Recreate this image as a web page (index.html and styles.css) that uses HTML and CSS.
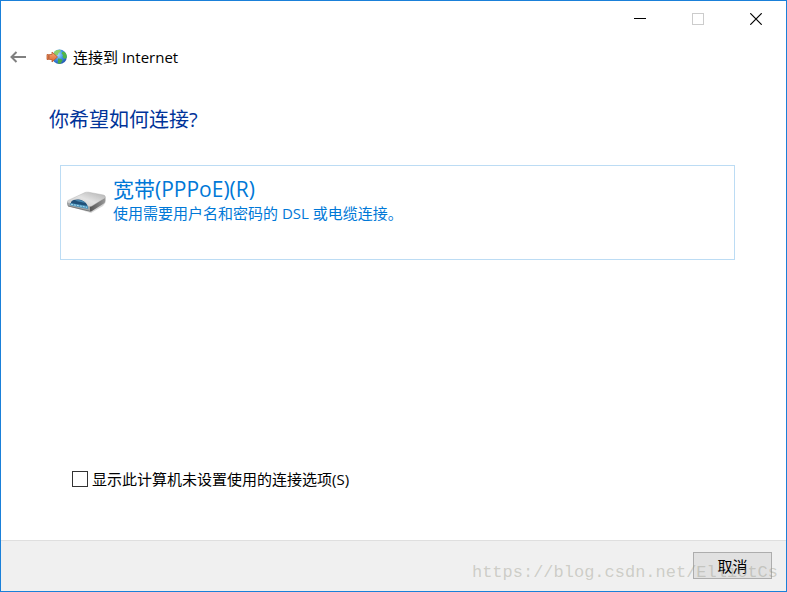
FILE: index.html
```html
<!DOCTYPE html>
<html lang="zh-CN">
    <head>
        <meta charset="utf-8">
        <title>连接到 Internet</title>
        <meta name="viewport" content="width=device-width, initial-scale=1.0">
        <link rel="stylesheet" href="styles.css">
    </head>
    <body>
        <div class="window">
            <div class="titlebar">
                <button class="caption" type="button" aria-label="最小化">
                    <svg width="12" height="12" viewBox="0 0 12 12" shape-rendering="crispEdges"><path d="M0 5.5h12" stroke="#000"/></svg>
                </button>
                <button class="caption" type="button" aria-label="最大化" disabled>
                    <svg width="12" height="12" viewBox="0 0 12 12" shape-rendering="crispEdges"><path d="M.5.5h11v11H.5z" fill="none" stroke="#ccc"/></svg>
                </button>
                <button class="caption" type="button" aria-label="关闭">
                    <svg width="12" height="12" viewBox="0 0 12 12"><path d="M.3.3l11.4 11.4M11.7.3L.3 11.7" stroke="#000" stroke-width="1.2"/></svg>
                </button>
            </div>
            <header class="header">
                <button class="back" type="button" aria-label="返回">
                    <svg width="16" height="12" viewBox="0 0 16 12"><path d="M16 6H1.500M6.500 1L1.500 6l5 5" fill="none" stroke="#808080" stroke-width="2"/></svg>
                </button>
                <svg class="globe" width="22" height="16" viewBox="0 0 22 16">
                    <defs>
                        <radialGradient id="sea" cx=".4" cy=".35" r=".75">
                            <stop offset="0" stop-color="#a5dcff"/>
                            <stop offset=".5" stop-color="#3b8fe8"/>
                            <stop offset="1" stop-color="#1c469e"/>
                        </radialGradient>
                        <linearGradient id="arrow" x2="0" y2="1">
                            <stop offset="0" stop-color="#f9ab78"/>
                            <stop offset="1" stop-color="#e0602a"/>
                        </linearGradient>
                    </defs>
                    <circle cx="13.5" cy="7.8" r="7.3" fill="url(#sea)"/>
                    <path d="M8 3.2C9.500 1.500 12 .6 14.500.9L14.800 2.500 12.500 4 12 6 9.500 6.500 8 5z" fill="#8ccf6a"/>
                    <path d="M16.500 2.500l2.500.7c1.500 1.700 2 3.600 1.700 5.600L18.500 10l-2-2 .5-2-1.500-1.500z" fill="#4fb648"/>
                    <path d="M12 9.500l3.500.5 1 1.500-2 3.300-2.700-.2z" fill="#48aa44"/>
                    <path d="M1 5.500h1.500v5H1zM3.300 5.500H6V3l5.500 5L6 13v-2.500H3.300z" fill="url(#arrow)" stroke="#b9582c" stroke-width=".8"/>
                </svg>
                <span class="title">连接到 Internet</span>
            </header>
            <main class="content">
                <h1 class="question">你希望如何连接?</h1>
                <button class="option" type="button">
                    <svg class="modem" width="40" height="22" viewBox="0 0 40 22">
                        <defs>
                            <linearGradient id="top" x1="1" x2="0" y2="1">
                                <stop offset="0" stop-color="#b0b0b0"/>
                                <stop offset=".5" stop-color="#e2e2e2"/>
                                <stop offset="1" stop-color="#c8c8c8"/>
                            </linearGradient>
                            <linearGradient id="side" x2="1">
                                <stop offset="0" stop-color="#555"/>
                                <stop offset="1" stop-color="#999"/>
                            </linearGradient>
                        </defs>
                        <path d="M3 15.500l20 5.500L39 11l-3 4-12 7z" fill="#bbb" opacity=".6"/>
                        <path d="M0 11L23 15v5.500L2 15.500Q0 15 0 13z" fill="#a0a4a6"/>
                        <path d="M23 15L38.500 6.500V10q0 1.500-1.500 2.400L25 20l-2 .5z" fill="url(#side)"/>
                        <path d="M0 11Q0 9.500 3 8.500L18 1.500Q19.500 1 21.500 1.200l15 2.800q2 .4 2 2.500L25 15q-1.500.7-3 .5L1 12z" fill="url(#top)" stroke="#aaa" stroke-width=".4"/>
                        <path d="M4 11C7 7.300 17 7.500 20.500 14.500L20 15.500 4 12.500z" fill="#205078"/>
                        <path d="M8 9.700c4-1.300 8-.4 10.500 2.300L14 11z" fill="#4a8cb4"/>
                        <path d="M3 12l18 3v3L3 14.300z" fill="#4c94bc"/>
                        <path d="M4 13.300l16 3" stroke="#a4daf0" stroke-width="1" stroke-dasharray="2 1"/>
                        <path d="M1 15l22 5.300 2-.6" fill="none" stroke="#606060" stroke-width=".7"/>
                    </svg>
                    <span class="option-text">
                        <span class="option-title">宽带(PPPoE)(R)</span>
                        <span class="option-note">使用需要用户名和密码的 DSL 或电缆连接。</span>
                    </span>
                </button>
                <label class="show-all" for="showAll">
                    <input type="checkbox" id="showAll">
                    <span>显示此计算机未设置使用的连接选项(S)</span>
                </label>
            </main>
            <footer class="footer">
                <button class="cancel" type="button">取消</button>
                <span class="watermark">https://blog.csdn.net/ElliotCs</span>
            </footer>
        </div>
    </body>
</html>
```

FILE: styles.css
```css
* {
    box-sizing: border-box;
}

body, button, input{
    font-family: "Open Sans", "Noto Sans CJK SC", sans-serif;
    font-size: 15px;
}

body{
    margin: 0;
    color: #000;
    background-color: #fff;
}

button{
    margin: 0;
    padding: 0;
    border: 0;
    background: none;
    color: inherit;
}

svg{
    display: block;
    flex: none;
}

.window{
    min-height: 100vh;
    display: flex;
    flex-direction: column;
    border: 1px solid #1a80d9;
}

.titlebar{
    height: 36px;
    display: flex;
    justify-content: flex-end;
    padding-right: 1px;
}

.caption{
    width: 58px;
    display: flex;
    align-items: center;
    justify-content: center;
}

.header{
    height: 40px;
    display: flex;
    align-items: center;
    padding-left: 9px;
}

.back{
    margin-right: 20px;
}

.title{
    margin-left: 5px;
    line-height: 20px;
}

.content{
    flex: 1;
    display: flex;
    flex-direction: column;
    padding: 28px 51px 48px 48px;
}

.question{
    margin: 0;
    font-size: 20px;
    font-weight: normal;
    line-height: 30px;
    color: #003399;
}

.option{
    min-height: 95px;
    display: flex;
    align-items: flex-start;
    gap: 6px;
    margin: 30px 0 0 11px;
    padding: 10px 6px;
    border: 1px solid #bcdcf4;
    color: #0078d7;
    text-align: left;
}

.modem{
    margin-top: 15px;
}

.option-title, .option-note{
    display: block;
}

.option-title{
    font-size: 21px;
    line-height: 26px;
}

.option-note{
    line-height: 22px;
}

.show-all{
    display: flex;
    align-items: center;
    align-self: flex-start;
    gap: 4px;
    margin: auto 0 0 23px;
    line-height: 26px;
}

.show-all input{
    appearance: none;
    width: 16px;
    height: 16px;
    margin: 0;
    border: 1px solid #333;
    background-color: #fff;
}

.show-all input:checked{
    box-shadow: inset 0 0 0 3px #fff;
    background-color: #333;
}

.footer{
    position: relative;
    display: flex;
    justify-content: flex-end;
    padding: 11px 14px 12px;
    border-top: 1px solid #dfdfdf;
    background-color: #f0f0f0;
}

.cancel{
    width: 79px;
    height: 27px;
    border: 1px solid #adadad;
    background-color: #e1e1e1;
}

/* lies over the cancel button */
.watermark{
    position: absolute;
    right: 8px;
    bottom: 6px;
    font-family: "Liberation Mono", monospace;
    font-size: 17px;
    line-height: 24px;
    color: rgba(150, 150, 135, 0.4);
    pointer-events: none;
}
```
